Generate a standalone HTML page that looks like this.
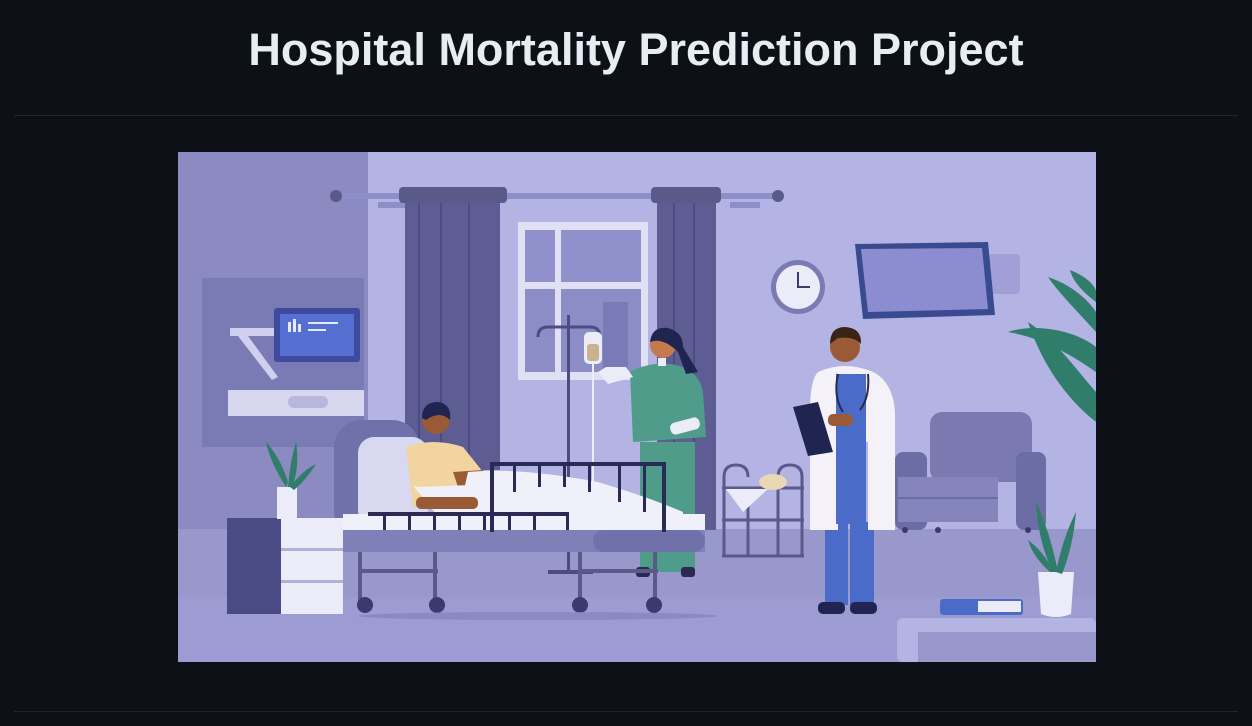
<!DOCTYPE html>
<html><head><meta charset="utf-8"><style>
html,body{margin:0;padding:0;background:#0d1117;width:1252px;height:726px;overflow:hidden}
h1{position:absolute;left:10px;width:1252px;top:22px;margin:0;text-align:center;color:#e6edf3;font-family:"Liberation Sans",sans-serif;font-weight:600;font-size:45px;line-height:56px}
.hr{position:absolute;left:14px;width:1224px;height:1px;background:#21262d}
svg{position:absolute;left:178px;top:152px}
</style></head><body>
<h1>Hospital Mortality Prediction Project</h1>
<div class="hr" style="top:115px"></div>
<div class="hr" style="top:711px"></div>
<svg width="918" height="510" viewBox="0 0 918 510">
<rect width="918" height="510" fill="#b4b4e4"/>
<rect x="0" y="0" width="190" height="448" fill="#8b8bc1"/>
<rect x="0" y="377" width="918" height="133" fill="#9898cc"/>
<rect x="0" y="445" width="918" height="65" fill="#9c9cd2"/>
<rect x="24" y="126" width="162" height="169" fill="#7a7ab5"/>
<polygon points="52,176 100,176 100,184 70,184 100,225 94,228 60,184 52,184" fill="#d0d0ee"/>
<rect x="96" y="156" width="86" height="54" rx="3" fill="#3d4a9e"/>
<rect x="102" y="162" width="74" height="42" fill="#5570d0"/>
<rect x="110" y="170" width="3" height="10" fill="#e8e8ff"/><rect x="115" y="167" width="3" height="13" fill="#e8e8ff"/><rect x="120" y="172" width="3" height="8" fill="#e8e8ff"/>
<rect x="130" y="170" width="30" height="2" fill="#e8e8ff"/><rect x="130" y="177" width="18" height="2" fill="#e8e8ff"/>
<rect x="50" y="238" width="136" height="26" fill="#d7d7ef"/>
<rect x="110" y="244" width="40" height="12" rx="6" fill="#b8b8dd"/>
<rect x="158" y="41" width="446" height="6" fill="#8e8ec8"/>
<circle cx="158" cy="44" r="6" fill="#5a5a8a"/><circle cx="600" cy="44" r="6" fill="#5a5a8a"/>
<rect x="200" y="50" width="30" height="6" fill="#8e8ec8"/><rect x="552" y="50" width="30" height="6" fill="#8e8ec8"/>
<rect x="340" y="70" width="130" height="158" fill="#e0e0f4"/>
<rect x="347" y="78" width="30" height="52" fill="#9090cc"/><rect x="383" y="78" width="80" height="52" fill="#9090cc"/>
<rect x="347" y="137" width="30" height="83" fill="#8c8cc6"/><rect x="383" y="137" width="80" height="83" fill="#8c8cc6"/>
<rect x="425" y="150" width="25" height="70" fill="#7a7ab8"/>
<rect x="227" y="45" width="95" height="273" fill="#5d5d94"/>
<rect x="240" y="50" width="2" height="268" fill="#4c4c80"/><rect x="262" y="50" width="2" height="268" fill="#4c4c80"/><rect x="290" y="50" width="2" height="268" fill="#4c4c80"/>
<rect x="221" y="35" width="108" height="16" rx="4" fill="#5a5a8a"/>
<rect x="479" y="45" width="59" height="333" fill="#5d5d94"/>
<rect x="495" y="50" width="2" height="328" fill="#4c4c80"/><rect x="515" y="50" width="2" height="328" fill="#4c4c80"/>
<rect x="473" y="35" width="70" height="16" rx="4" fill="#5a5a8a"/>
<circle cx="620" cy="135" r="27" fill="#7a7ab5"/><circle cx="620" cy="135" r="22" fill="#ecebf8"/>
<path d="M620 120 V135 H632" stroke="#3a3a70" stroke-width="2" fill="none"/>
<rect x="810" y="102" width="32" height="40" rx="4" fill="#a0a0d6"/>
<polygon points="677,92 810,90 817,163 685,167" fill="#3a4a90"/>
<polygon points="683,97 804,96 810,157 690,160" fill="#8c8cd0"/>
<g fill="#2f7d6a">
<path d="M918 270 C880 240 860 200 850 170 C880 190 900 220 918 240Z"/>
<path d="M918 220 C890 200 860 185 830 180 C860 170 900 180 918 195Z"/>
<path d="M918 180 C900 160 880 140 870 125 C900 135 915 155 918 160Z"/>
<path d="M918 150 C905 140 895 130 892 118 C910 125 918 135 918 140Z"/>
</g>
<rect x="752" y="260" width="102" height="70" rx="12" fill="#7a7ab0"/>
<rect x="717" y="300" width="32" height="78" rx="8" fill="#6d6da5"/>
<rect x="838" y="300" width="30" height="78" rx="8" fill="#6d6da5"/>
<rect x="720" y="325" width="100" height="45" fill="#8585bb"/>
<rect x="720" y="345" width="100" height="2" fill="#6d6da5"/>
<circle cx="727" cy="378" r="3" fill="#3a3a70"/><circle cx="760" cy="378" r="3" fill="#3a3a70"/><circle cx="850" cy="378" r="3" fill="#3a3a70"/>
<g stroke="#5a5a8a" stroke-width="3" fill="none">
<path d="M546 405 V325 Q546 313 558 313 Q570 313 570 325"/>
<path d="M600 325 Q600 313 612 313 Q624 313 624 325 V405"/>
<line x1="544" y1="336" x2="626" y2="336"/><line x1="544" y1="368" x2="626" y2="368"/><line x1="544" y1="404" x2="626" y2="404"/>
<line x1="570" y1="336" x2="570" y2="404"/><line x1="600" y1="336" x2="600" y2="404"/>
</g>
<polygon points="548,337 590,337 565,360" fill="#ecebf8"/>
<ellipse cx="595" cy="330" rx="14" ry="8" fill="#ead7b5"/>
<rect x="389" y="163" width="3" height="258" fill="#4c4c80"/>
<path d="M360 185 Q360 175 370 175 H412 Q422 175 422 185" stroke="#4c4c80" stroke-width="3" fill="none"/>
<rect x="370" y="418" width="45" height="4" fill="#4c4c80"/>
<rect x="406" y="180" width="18" height="32" rx="5" fill="#ecebf8"/>
<rect x="409" y="192" width="12" height="17" rx="3" fill="#c9b28f"/>
<rect x="414" y="212" width="2" height="120" fill="#ecebf8"/>
<rect x="462" y="290" width="55" height="130" fill="#4f9c8a"/>
<rect x="458" y="415" width="14" height="10" rx="3" fill="#2a2a50"/><rect x="503" y="415" width="14" height="10" rx="3" fill="#2a2a50"/>
<path d="M452 220 Q470 210 492 212 Q520 215 525 240 L528 285 L455 290 Z" fill="#4f9c8a"/>
<path d="M455 225 L430 232 L420 220 L428 215 L448 215Z" fill="#ecebf8"/>
<rect x="492" y="268" width="30" height="12" rx="5" fill="#ecebf8" transform="rotate(-15 507 274)"/>
<circle cx="485" cy="193" r="13" fill="#c47a4c"/>
<path d="M472 190 Q474 174 490 176 Q505 180 505 195 L520 220 L508 222 L500 200 Q485 185 472 190Z" fill="#1f2550"/>
<rect x="480" y="206" width="8" height="8" fill="#ecebf8"/>
<rect x="647" y="370" width="23" height="83" fill="#4a6cc8"/><rect x="672" y="370" width="24" height="83" fill="#4a6cc8"/>
<rect x="640" y="450" width="27" height="12" rx="5" fill="#1f2550"/><rect x="672" y="450" width="27" height="12" rx="5" fill="#1f2550"/>
<path d="M640 220 Q667 208 695 220 Q715 230 717 260 L717 378 L690 378 L690 290 L660 290 L660 378 L632 378 L632 260 Q632 228 640 220Z" fill="#f4f2f8"/>
<rect x="658" y="222" width="30" height="150" fill="#4a6cc8"/>
<path d="M660 222 Q655 245 665 260 M690 222 Q692 245 682 258" stroke="#2a2a50" stroke-width="2" fill="none"/>
<circle cx="667" cy="195" r="15" fill="#9b5a36"/>
<path d="M652 192 Q652 175 667 175 Q684 176 683 192 Q676 184 660 186Z" fill="#3a2418"/>
<polygon points="615,255 640,250 655,300 630,304" fill="#1f2550"/>
<rect x="650" y="262" width="25" height="12" rx="5" fill="#9b5a36"/>
<rect x="156" y="268" width="86" height="120" rx="28" fill="#7070aa"/>
<rect x="180" y="285" width="70" height="90" rx="16" fill="#d8d8f0"/>
<rect x="165" y="378" width="362" height="22" fill="#8080b8"/>
<rect x="415" y="378" width="112" height="22" rx="11" fill="#7070aa"/>
<rect x="165" y="362" width="362" height="16" fill="#f0f0fa"/>
<g fill="#5a5a8a">
<rect x="180" y="400" width="4" height="50"/><rect x="255" y="400" width="4" height="50"/><rect x="400" y="400" width="4" height="50"/><rect x="475" y="400" width="4" height="50"/>
<rect x="180" y="417" width="80" height="4"/><rect x="400" y="417" width="80" height="4"/>
</g>
<g fill="#3a3a70"><circle cx="187" cy="453" r="8"/><circle cx="259" cy="453" r="8"/><circle cx="402" cy="453" r="8"/><circle cx="476" cy="453" r="8"/></g>
<ellipse cx="360" cy="464" rx="180" ry="4" fill="#8a8ac0"/>
<path d="M228 295 Q255 285 285 295 L305 320 L310 345 L235 355 Z" fill="#f2d4a0"/>
<circle cx="258" cy="268" r="14" fill="#9b5a36"/>
<path d="M244 266 Q244 250 260 250 Q274 252 272 268 Q262 258 248 268Z" fill="#1f2550"/>
<path d="M275 320 L305 318 L310 330 L280 335Z" fill="#9b5a36"/>
<path d="M245 345 Q230 330 240 335 L320 332 L505 378 L270 378 Z" fill="#f0f0fa"/>
<path d="M290 320 Q340 315 420 330 Q470 345 505 360 L505 378 L280 365Z" fill="#f0f0fa"/>
<rect x="238" y="345" width="62" height="12" rx="5" fill="#9b5a36"/>
<g fill="#2a2a55">
<rect x="312" y="310" width="176" height="4"/><rect x="312" y="310" width="4" height="70"/><rect x="484" y="310" width="4" height="70"/>
<rect x="335" y="310" width="3" height="30"/><rect x="360" y="310" width="3" height="25"/><rect x="385" y="310" width="3" height="25"/><rect x="410" y="310" width="3" height="30"/><rect x="440" y="310" width="3" height="40"/><rect x="465" y="310" width="3" height="50"/>
<rect x="190" y="360" width="200" height="4"/>
<rect x="205" y="360" width="3" height="18"/><rect x="230" y="360" width="3" height="18"/><rect x="255" y="360" width="3" height="18"/><rect x="280" y="360" width="3" height="18"/><rect x="305" y="360" width="3" height="18"/><rect x="330" y="360" width="3" height="18"/><rect x="355" y="360" width="3" height="18"/><rect x="388" y="360" width="3" height="18"/>
</g>
<rect x="49" y="366" width="56" height="96" fill="#4a4a85"/>
<rect x="103" y="366" width="62" height="96" fill="#ecebf8"/>
<rect x="103" y="396" width="62" height="3" fill="#b0b0d8"/><rect x="103" y="428" width="62" height="3" fill="#b0b0d8"/>
<rect x="99" y="335" width="20" height="32" fill="#ecebf8"/>
<g fill="#2f7d6a"><path d="M108 335 Q92 310 88 290 Q102 305 110 330Z"/><path d="M110 335 Q112 310 118 290 Q122 315 114 335Z"/><path d="M112 335 Q125 318 138 312 Q128 328 116 338Z"/></g>
<path d="M860 420 H896 L893 462 Q878 468 863 462Z" fill="#ecebf8"/>
<g fill="#2f7d6a"><path d="M875 420 Q860 390 858 350 Q872 380 880 420Z"/><path d="M878 420 Q885 385 898 360 Q895 395 884 422Z"/><path d="M872 420 Q855 405 850 388 Q866 400 876 420Z"/></g>
<rect x="762" y="447" width="83" height="16" rx="3" fill="#4a6cc8"/>
<rect x="800" y="449" width="43" height="11" fill="#ecebf8"/>
<rect x="719" y="466" width="199" height="44" rx="6" fill="#b4b4e4"/>
<rect x="740" y="480" width="178" height="30" fill="#9898cc"/>
</svg>
</body></html>
